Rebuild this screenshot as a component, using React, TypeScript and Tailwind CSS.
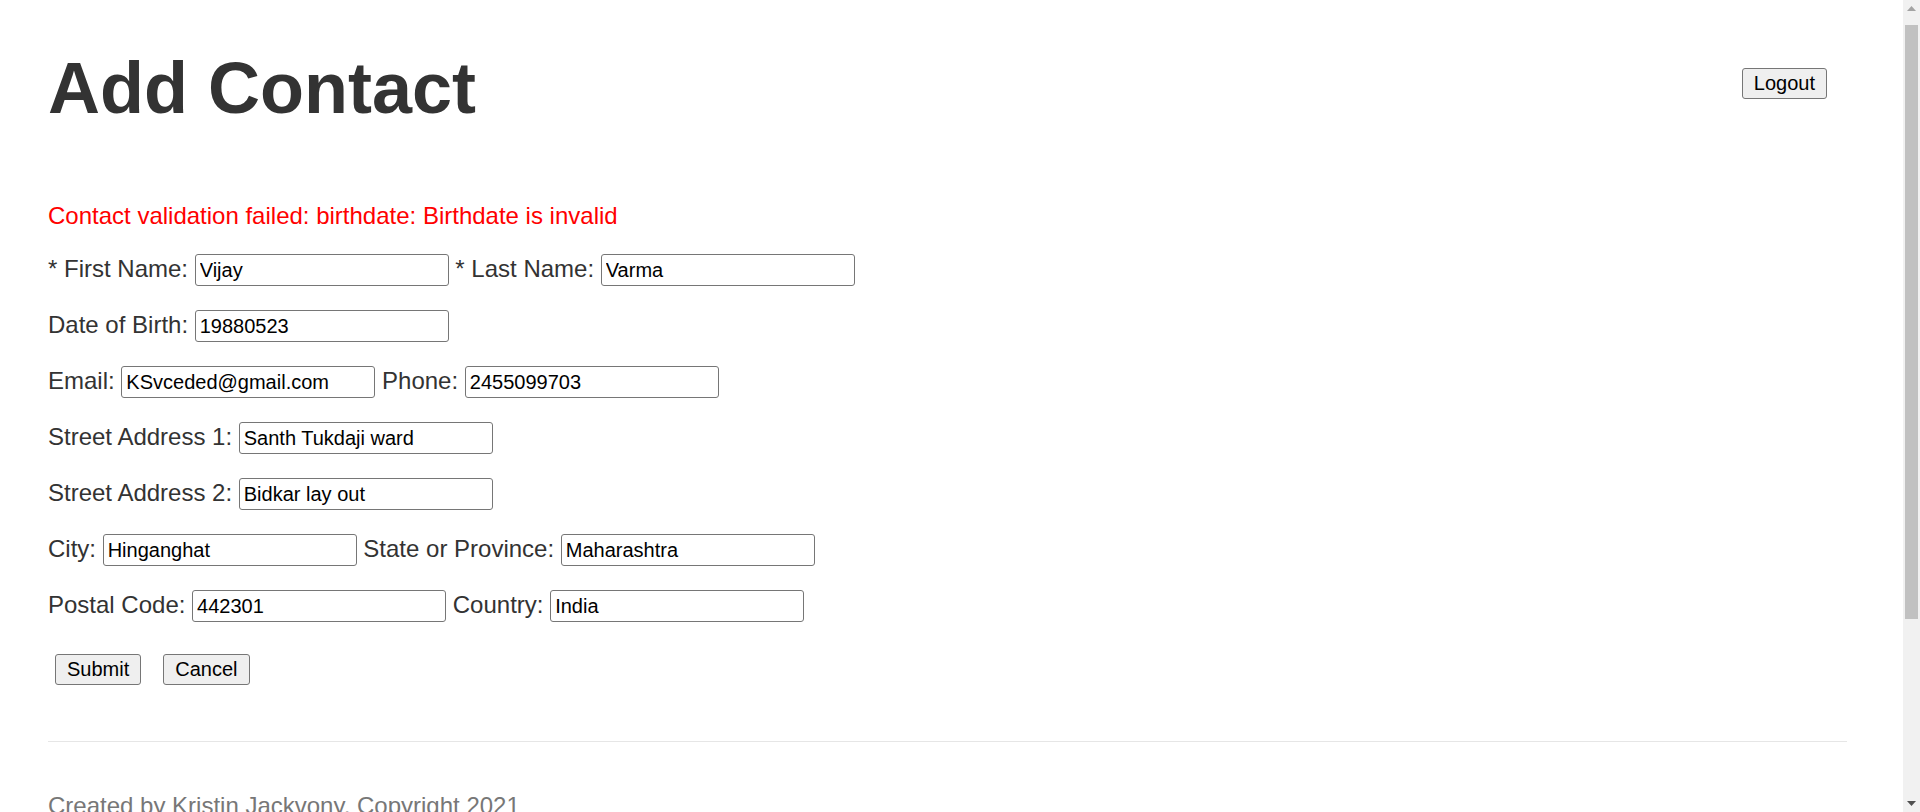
import React, { useState } from "react";

interface Field {
  label: string;
  value: string;
}

const rows: Field[][] = [
  [
    { label: "* First Name:", value: "Vijay" },
    { label: "* Last Name:", value: "Varma" },
  ],
  [{ label: "Date of Birth:", value: "19880523" }],
  [
    { label: "Email:", value: "KSvceded@gmail.com" },
    { label: "Phone:", value: "2455099703" },
  ],
  [{ label: "Street Address 1:", value: "Santh Tukdaji ward" }],
  [{ label: "Street Address 2:", value: "Bidkar lay out" }],
  [
    { label: "City:", value: "Hinganghat" },
    { label: "State or Province:", value: "Maharashtra" },
  ],
  [
    { label: "Postal Code:", value: "442301" },
    { label: "Country:", value: "India" },
  ],
];

const btn =
  "bg-[#efefef] border border-[#767676] rounded-[3px] text-[20px] leading-[23px] text-black px-[11px] h-[31px] hover:bg-[#e5e5e5]";

const App: React.FC = () => {
  const [values, setValues] = useState<Record<string, string>>(() => {
    const init: Record<string, string> = {};
    rows.flat().forEach((f) => (init[f.label] = f.value));
    return init;
  });

  return (
    <div className="flex h-screen bg-white font-['Liberation_Sans',Arial,sans-serif] text-[#333]">
      <main className="w-[1903px] overflow-y-auto pl-[48px] pr-[56px]">
        <header className="flex justify-between items-start pt-[47px]">
          <h1 className="text-[72px] font-bold leading-[83px]">Add Contact</h1>
          <button className={`${btn} mt-[21px] mr-[20px]`}>Logout</button>
        </header>

        <form className="flex flex-col gap-6 mt-[72px]" onSubmit={(e) => e.preventDefault()}>
          <p className="text-[24px] leading-[28px] text-[#ff0000]">
            Contact validation failed: birthdate: Birthdate is invalid
          </p>
          {rows.map((row, i) => (
            <div key={i} className="text-[24px] leading-[28px]">
              {row.map((f, j) => (
                <React.Fragment key={f.label}>
                  {j > 0 && " "}
                  <label>
                    {f.label}{" "}
                    <input
                      type="text"
                      value={values[f.label]}
                      onChange={(e) =>
                        setValues({ ...values, [f.label]: e.target.value })
                      }
                      className="w-[254px] h-[32px] border border-[#767676] rounded-[3px] px-[4px] text-[20px] leading-[23px] text-black bg-white"
                    />
                  </label>
                </React.Fragment>
              ))}
            </div>
          ))}
          <div className="flex gap-[22px] ml-[7px] mt-2">
            <button type="submit" className={btn}>
              Submit
            </button>
            <button type="button" className={btn}>
              Cancel
            </button>
          </div>
        </form>

        <hr className="mt-[56px] border-t border-[#e6e6e6]" />
        <footer className="mt-[50px] mb-[244px] text-[24px] leading-[28px] text-[#777]">
          Created by Kristin Jackvony, Copyright 2021
        </footer>
      </main>

      {/* page scrollbar */}
      <aside className="w-[17px] shrink-0 flex flex-col bg-[#f1f1f1]">
        <div className="h-[17px] flex items-center justify-center">
          <svg width="9" height="5" viewBox="0 0 9 5">
            <path d="M4.5 0L9 5H0z" fill="#a3a3a3" />
          </svg>
        </div>
        <div className="flex-1 pt-[8px]">
          <div className="h-[594px] mx-[2px] bg-[#c1c1c1]" />
        </div>
        <div className="h-[17px] flex items-center justify-center">
          <svg width="9" height="5" viewBox="0 0 9 5">
            <path d="M0 0H9L4.5 5z" fill="#505050" />
          </svg>
        </div>
      </aside>
    </div>
  );
};

export default App;
